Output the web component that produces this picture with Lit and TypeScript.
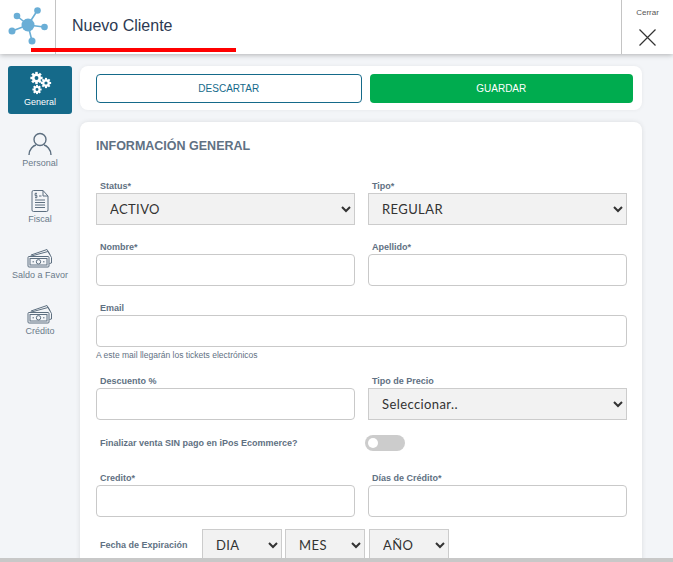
import { LitElement, html, css, svg } from "lit";
import { customElement } from "lit/decorators.js";

const gear = (cx: number, cy: number, r: number, color: string) => {
  const teeth = [];
  for (let i = 0; i < 8; i++) {
    teeth.push(svg`<rect x=${cx - r * 0.26} y=${cy - r * 1.28} width=${r * 0.52} height=${r * 0.6} fill=${color} transform="rotate(${i * 45} ${cx} ${cy})"></rect>`);
  }
  return svg`${teeth}<circle cx=${cx} cy=${cy} r=${r * 0.68} fill="none" stroke=${color} stroke-width=${r * 0.55}></circle>`;
};

const moneyIcon = html`<svg class="ico" width="26" height="20" viewBox="0 0 26 20" fill="none" stroke="#5d6f80" stroke-width="1">
  <path d="M4 7 L20 1.5 L23 6.5"></path>
  <path d="M2.5 8.5 L21 3.5 L24.5 9.5 V15 L22.5 15.5"></path>
  <rect x="1" y="8.5" width="21" height="10.5" rx="1"></rect>
  <rect x="3" y="10.5" width="17" height="6.5"></rect>
  <circle cx="11.5" cy="13.8" r="2.2"></circle>
  <path d="M5.5 13.8h1.5M16 13.8h1.5"></path>
</svg>`;

@customElement("app-root")
export class AppRoot extends LitElement {
  static styles = css`
    :host { display: block; width: 673px; height: 562px; overflow: hidden; position: relative; background: #f3f5f8; font-family: "Liberation Sans", Arial, sans-serif; color: #5f7183; }
    * { box-sizing: border-box; }
    .header { height: 54px; background: #fff; display: flex; position: relative; box-shadow: 0 1px 5px rgba(0,0,0,.28); z-index: 2; }
    .logo { width: 56px; border-right: 1px solid #c4c4c4; padding-left: 7px; display: flex; align-items: flex-start; }
    .title { flex: 1; padding-left: 16px; padding-top: 17px; font-size: 16px; line-height: 18px; color: #2c3a52; }
    .close { width: 52px; border-left: 1px solid #c4c4c4; display: flex; flex-direction: column; align-items: center; padding-top: 8px; font-size: 8px; line-height: 9px; color: #555; }
    .close svg { margin-top: 12px; }
    .redbar { position: absolute; left: 31px; top: 48px; width: 205px; height: 4px; background: #f00; }
    .body { display: flex; height: 508px; overflow: hidden; }
    .side { width: 80px; padding: 12px 0 0 8px; flex: none; }
    .nav { width: 64px; height: 48px; margin-bottom: 8px; display: flex; flex-direction: column; align-items: center; justify-content: flex-end; font-size: 9px; line-height: 11px; color: #6a7a8a; padding-bottom: 1px; }
    .nav.active { background: #156a8a; color: #fff; border-radius: 3px; padding-bottom: 6px; font-weight: 400; }
    .nav .ico { margin-bottom: 2px; }
    .main { width: 562px; padding-top: 12px; flex: none; }
    .toolbar { height: 44px; background: #fff; border-radius: 8px; display: flex; gap: 8px; padding: 8px 9px 7px 16px; margin-bottom: 12px; box-shadow: 0 0 4px rgba(0,0,0,.06); }
    .btn { flex: 1; border-radius: 4px; font-size: 10px; display: flex; align-items: center; justify-content: center; }
    .btn.ghost { border: 1px solid #156a8a; color: #156a8a; }
    .btn.solid { background: #00ac4f; color: #fff; }
    .card { background: #fff; border-radius: 8px 8px 0 0; padding: 17px 15px 0 16px; height: 460px; box-shadow: 0 0 5px rgba(0,0,0,.1); }
    h2 { margin: 0 0 26px; font-size: 12.5px; line-height: 14px; font-weight: 700; color: #5f7183; }
    .row { display: grid; grid-template-columns: 259px 259px; column-gap: 13px; margin-bottom: 15px; }
    .full { grid-column: 1 / 3; }
    label { display: block; padding-left: 4px; font-size: 9px; line-height: 14px; font-weight: 700; color: #5f7183; }
    input, select { display: block; width: 100%; height: 32px; font-family: Lato, sans-serif; font-size: 13px; color: #333; }
    input { border: 1px solid #c9c9c9; border-radius: 4px; background: #fff; }
    select { border: 1px solid #ccc; border-radius: 0; background: #f2f2f2; padding-left: 9px; letter-spacing: .4px; }
    .hint { font-size: 8.5px; line-height: 10px; margin: 3px 0 -1px; color: #5f7183; }
    .switch-row { display: flex; align-items: center; height: 16px; margin-bottom: 20px; margin-top: 13px; }
    .switch-row label { width: 269px; }
    .switch { width: 40px; height: 16px; border-radius: 8px; background: #ccc; padding: 3px 0 0 3px; }
    .knob { width: 10px; height: 10px; border-radius: 50%; background: #fff; }
    .date { display: flex; align-items: center; margin-top: -3px; }
    .date label { width: 106px; }
    .date select { width: 80px; margin-right: 3px; }
    .date select:last-child { margin-left: 1px; }
    .footbar { position: absolute; left: 0; right: 0; bottom: 0; height: 4px; background: #c8c8c8; z-index: 3; }
  `;

  render() {
    return html`
      <div class="header">
        <div class="logo">
          <svg width="44" height="48" viewBox="7 0 44 48" fill="#6aaed6" stroke="#6aaed6">
            <g stroke-width="1.6"><path d="M28 25 17 16M28 25 37 11M28 25 44 27M28 25 32 41M28 25 12 31"></path></g>
            <g stroke="none">
              <circle cx="28" cy="25" r="6.5"></circle><circle cx="17" cy="16" r="3.3"></circle>
              <circle cx="37.5" cy="10.5" r="3.3"></circle><circle cx="44.5" cy="27" r="3.3"></circle>
              <circle cx="32" cy="41" r="3.5"></circle><circle cx="12" cy="31" r="3.5"></circle>
            </g>
          </svg>
        </div>
        <div class="title">Nuevo Cliente</div>
        <div class="close">
          <span>Cerrar</span>
          <svg width="17" height="17" viewBox="0 0 17 17" stroke="#333" stroke-width="1.2"><path d="M.5.5l16 16M16.500.5l-16 16"></path></svg>
        </div>
        <div class="redbar"></div>
      </div>
      <div class="body">
        <div class="side">
          <div class="nav active">
            <svg class="ico" width="24" height="24" viewBox="0 0 24 24">
              ${gear(8.5, 7, 4.8, "#fff")}${gear(18, 12, 4, "#fff")}${gear(9, 18.5, 3.6, "#fff")}
            </svg>
            General
          </div>
          <div class="nav">
            <svg class="ico" width="24" height="24" viewBox="0 0 24 24" fill="none" stroke="#5d6f80" stroke-width="1.4">
              <circle cx="12" cy="7.500" r="6"></circle><path d="M1 23c0-6 4.500-9.500 7-10M23 23c0-6-4.500-9.500-7-10"></path>
            </svg>
            Personal
          </div>
          <div class="nav">
            <svg class="ico" width="18" height="22" viewBox="0 0 18 22" fill="none" stroke="#5d6f80">
              <path d="M2.500.5H12L17 6V20a1.500 1.500 0 0 1-1.500 1.500H2.500A1.500 1.500 0 0 1 1 20V2A1.500 1.500 0 0 1 2.500.5Z"></path>
              <path d="M12 .5V6H17M8 6h2.500M4 10h10M4 12.500h10M4 15h10M4 17.500h10"></path>
              <path d="M6 3.500H4V5.500H6V7.500H4M5 2.500V8.500" stroke-width=".8"></path>
            </svg>
            Fiscal
          </div>
          <div class="nav">${moneyIcon}Saldo a Favor</div>
          <div class="nav">${moneyIcon}Crédito</div>
        </div>
        <div class="main">
          <div class="toolbar">
            <div class="btn ghost">DESCARTAR</div>
            <div class="btn solid">GUARDAR</div>
          </div>
          <div class="card">
            <h2>INFORMACIÓN GENERAL</h2>
            <div class="row">
              <div><label>Status*</label><select><option>ACTIVO</option></select></div>
              <div><label>Tipo*</label><select><option>REGULAR</option></select></div>
            </div>
            <div class="row">
              <div><label>Nombre*</label><input /></div>
              <div><label>Apellido*</label><input /></div>
            </div>
            <div class="row">
              <div class="full"><label>Email</label><input />
                <div class="hint">A este mail llegarán los tickets electrónicos</div></div>
            </div>
            <div class="row">
              <div><label>Descuento %</label><input /></div>
              <div><label>Tipo de Precio</label><select><option>Seleccionar..</option></select></div>
            </div>
            <div class="switch-row">
              <label>Finalizar venta SIN pago en iPos Ecommerce?</label>
              <div class="switch"><div class="knob"></div></div>
            </div>
            <div class="row">
              <div><label>Credito*</label><input /></div>
              <div><label>Días de Crédito*</label><input /></div>
            </div>
            <div class="date">
              <label>Fecha de Expiración</label>
              <select><option>DIA</option></select>
              <select><option>MES</option></select>
              <select><option>AÑO</option></select>
            </div>
          </div>
        </div>
      </div>
      <div class="footbar"></div>
    `;
  }
}
